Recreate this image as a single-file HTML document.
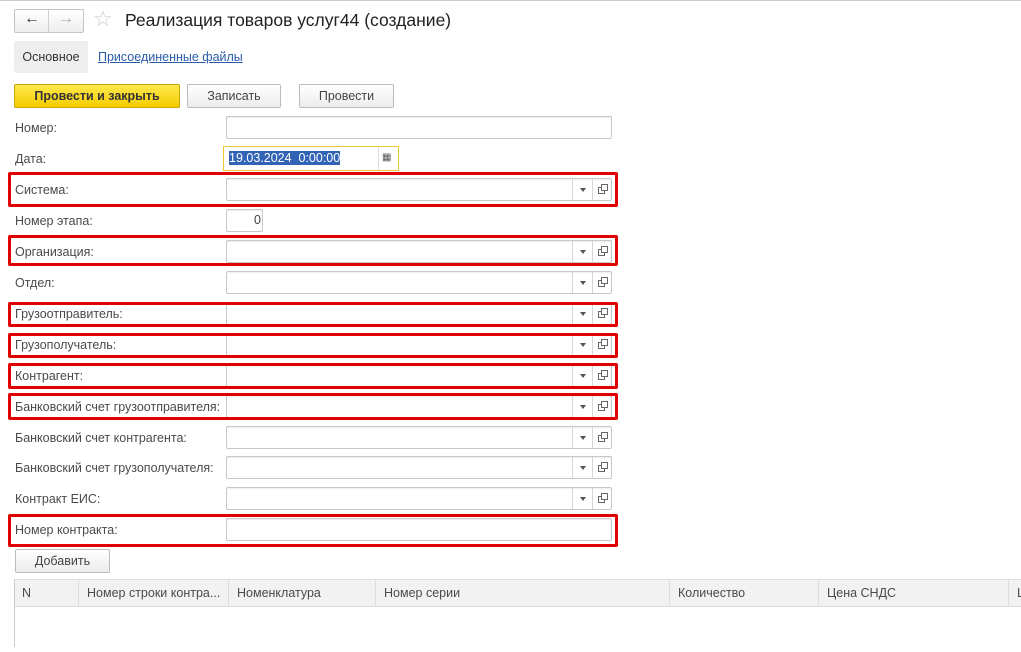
<!DOCTYPE html>
<html><head><meta charset="utf-8"><style>
body{margin:0;width:1021px;height:652px;background:#fff;position:relative;overflow:hidden;font-family:"Liberation Sans",Arial,sans-serif;color:#404040;}
.a{position:absolute;}
.lbl{position:absolute;left:15px;font-size:12.5px;color:#4a4a4a;}
.fld{position:absolute;left:226px;width:384px;height:21px;border:1px solid #c8c8c8;border-radius:2px;background:#fff;box-shadow:inset 0 1px 1px #eee;}
.dd{position:absolute;left:345px;top:0;width:20px;height:21px;border-left:1px solid #d6d6d6;}
.dd:after{content:"";position:absolute;left:7px;top:9px;border-left:3px solid transparent;border-right:3px solid transparent;border-top:4px solid #555;}
.cp{position:absolute;left:365px;top:0;width:19px;height:21px;border-left:1px solid #d6d6d6;}
.cp:before{content:"";position:absolute;left:5px;top:8px;width:5px;height:5px;border:1px solid #666;}
.cp:after{content:"";position:absolute;left:8px;top:5px;width:5px;height:5px;border:1px solid #666;background:#fff;}
.red{position:absolute;left:8px;width:604px;border:3px solid #e00000;border-radius:2px;}
.btn{position:absolute;top:84px;height:22px;border:1px solid #bdbdbd;border-radius:2px;background:linear-gradient(#fff,#ececec);font-size:12.5px;text-align:center;line-height:22px;color:#444;}
.th{position:absolute;top:579px;height:28px;line-height:28px;font-size:12.5px;color:#4a4a4a;border-left:1px solid #ddd;padding-left:8px;box-sizing:border-box;}
</style></head><body>
<div class="a" style="left:0;top:0;width:1021px;height:1px;background:#ccc"></div>
<div class="a" style="left:14px;top:9px;width:68px;height:22px;border:1px solid #c4c4c4;border-radius:2px;background:linear-gradient(#fff,#eee)"></div>
<div class="a" style="left:48px;top:10px;width:1px;height:22px;background:#d0d0d0"></div>
<div class="a" style="left:24px;top:10px;font-size:16px;color:#333;font-weight:bold">&#8592;</div>
<div class="a" style="left:58px;top:10px;font-size:16px;color:#aaa;font-weight:bold">&#8594;</div>
<div class="a" style="left:93px;top:6px;font-size:22px;color:#ccc">&#9734;</div>
<div class="a" style="left:125px;top:10px;font-size:17.5px;color:#222">Реализация товаров услуг44 (создание)</div>
<div class="a" style="left:14px;top:41px;width:74px;height:32px;background:#eeeeee;border-radius:2px;font-size:12.5px;line-height:32px;text-align:center;color:#333">Основное</div>
<div class="a" style="left:98px;top:50px;font-size:12.5px;color:#2a5cab;text-decoration:underline">Присоединенные файлы</div>
<div class="btn" style="left:14px;width:164px;background:linear-gradient(#ffe84d,#f5cc00);border-color:#c9a800;font-weight:bold;color:#333">Провести и закрыть</div>
<div class="btn" style="left:187px;width:92px">Записать</div>
<div class="btn" style="left:299px;width:93px">Провести</div>

<div class="lbl" style="top:121px">Номер:</div><div class="fld" style="top:116px"></div>
<div class="lbl" style="top:152px">Дата:</div>
<div class="a" style="left:223px;top:146px;width:174px;height:23px;border:1px solid #f0c830;background:#fff"></div>
<div class="a" style="left:229px;top:151px;height:14px;background:#3263b4;color:#fff;font-size:12.5px;line-height:14px">19.03.2024&nbsp; 0:00:00</div>
<div class="a" style="left:378px;top:147px;width:1px;height:23px;background:#ddd"></div>
<div class="a" style="left:382px;top:152px;font-size:10px;color:#555">&#9638;</div>

<div class="lbl" style="top:183px">Система:</div><div class="fld" style="top:178px"><div class="dd"></div><div class="cp"></div></div>
<div class="lbl" style="top:214px">Номер этапа:</div><div class="fld" style="top:209px;width:37px;text-align:right;font-size:12.5px;line-height:21px;padding-right:1px;box-sizing:border-box;height:23px">0</div>
<div class="lbl" style="top:245px">Организация:</div><div class="fld" style="top:240px"><div class="dd"></div><div class="cp"></div></div>
<div class="lbl" style="top:276px">Отдел:</div><div class="fld" style="top:271px"><div class="dd"></div><div class="cp"></div></div>
<div class="lbl" style="top:307px">Грузоотправитель:</div><div class="fld" style="top:302px"><div class="dd"></div><div class="cp"></div></div>
<div class="lbl" style="top:338px">Грузополучатель:</div><div class="fld" style="top:333px"><div class="dd"></div><div class="cp"></div></div>
<div class="lbl" style="top:369px">Контрагент:</div><div class="fld" style="top:364px"><div class="dd"></div><div class="cp"></div></div>
<div class="lbl" style="top:400px">Банковский счет грузоотправителя:</div><div class="fld" style="top:395px"><div class="dd"></div><div class="cp"></div></div>
<div class="lbl" style="top:431px">Банковский счет контрагента:</div><div class="fld" style="top:426px"><div class="dd"></div><div class="cp"></div></div>
<div class="lbl" style="top:461px">Банковский счет грузополучателя:</div><div class="fld" style="top:456px"><div class="dd"></div><div class="cp"></div></div>
<div class="lbl" style="top:492px">Контракт ЕИС:</div><div class="fld" style="top:487px"><div class="dd"></div><div class="cp"></div></div>
<div class="lbl" style="top:523px">Номер контракта:</div><div class="fld" style="top:518px"></div>

<div class="red" style="top:172px;height:29px"></div>
<div class="red" style="top:235px;height:25px"></div>
<div class="red" style="top:302px;height:19px"></div>
<div class="red" style="top:333px;height:19px"></div>
<div class="red" style="top:363px;height:20px"></div>
<div class="red" style="top:393px;height:21px"></div>
<div class="red" style="top:514px;height:27px"></div>

<div class="btn" style="left:15px;top:549px;width:93px">Добавить</div>

<div class="a" style="left:14px;top:579px;width:1007px;height:28px;background:#f2f2f2;border-top:1px solid #ddd;border-bottom:1px solid #ddd;box-sizing:border-box"></div>
<div class="a" style="left:14px;top:579px;width:1px;height:68px;background:#ccc"></div>
<div class="th" style="left:14px;width:64px;border-left:none">N</div>
<div class="th" style="left:78px;width:150px">Номер строки контра...</div>
<div class="th" style="left:228px;width:147px">Номенклатура</div>
<div class="th" style="left:375px;width:294px">Номер серии</div>
<div class="th" style="left:669px;width:149px">Количество</div>
<div class="th" style="left:818px;width:190px">Цена СНДС</div>
<div class="th" style="left:1008px;width:13px">Ц</div>
</body></html>
